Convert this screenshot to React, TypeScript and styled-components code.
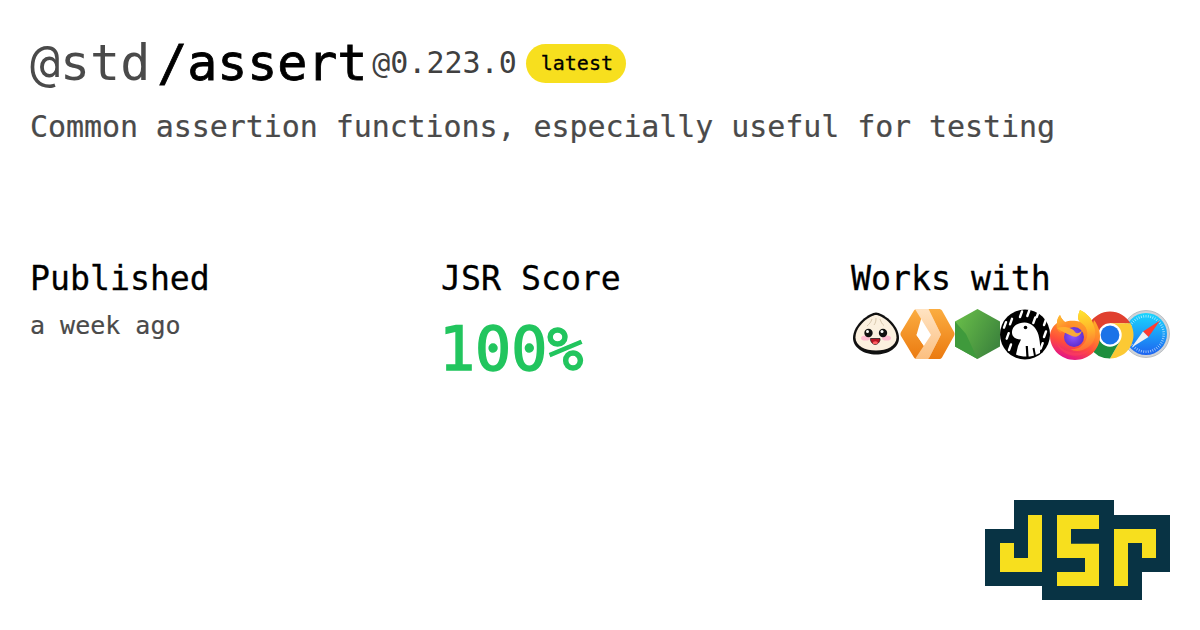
import React from "react";
import styled, { createGlobalStyle } from "styled-components";

const Global = createGlobalStyle`
  html, body { margin: 0; padding: 0; background: #fff; }
  body { font-family: "DejaVu Sans Mono", "Liberation Mono", monospace; }
`;

const Page = styled.div`
  width: 1200px;
  height: 630px;
  box-sizing: border-box;
  padding: 30px 30px 30px;
  display: flex;
  flex-direction: column;
  overflow: hidden;
`;
const TitleRow = styled.div`
  display: flex;
  align-items: center;
  height: 66px;
`;
const Scope = styled.span`
  font-size: 50px;
  color: #4a4a4a;
  margin-right: 7px;
  letter-spacing: -0.05px;
`;
const Name = styled.span`
  font-size: 50px;
  color: #000;
  -webkit-text-stroke: 0.8px #000;
  margin-right: 5px;
  letter-spacing: -0.1px;
`;
const Version = styled.span`
  font-size: 30px;
  color: #404040;
  margin-right: 9px;
  margin-bottom: 2px;
`;
const Badge = styled.span`
  display: inline-flex;
  align-items: center;
  height: 39px;
  padding: 0 13px 0 15px;
  border-radius: 20px;
  background: #f7df1e;
  color: #000;
  font-size: 20px;
  -webkit-text-stroke: 0.3px #000;
`;
const Description = styled.p`
  margin: 13px 0 0;
  font-size: 30px;
  line-height: 36px;
  letter-spacing: -0.08px;
  color: #4a4a4a;
  -webkit-text-stroke: 0.2px #4a4a4a;
`;
const Stats = styled.div`
  display: flex;
  justify-content: space-between;
  margin-top: 114px;
`;
const Stat = styled.div<{ $w: number }>`
  display: flex;
  flex-direction: column;
  flex: none;
  width: ${(p) => p.$w}px;
`;
const Label = styled.div`
  font-size: 33.2px;
  line-height: 40px;
  color: #000;
  white-space: nowrap;
  -webkit-text-stroke: 0.3px #000;
`;
const When = styled.div`
  margin-top: 12px;
  font-size: 25px;
  line-height: 30px;
  color: #4a4a4a;
  -webkit-text-stroke: 0.2px #4a4a4a;
`;
const Score = styled.div`
  margin-top: 14px;
  margin-left: -2px;
  font-size: 60px;
  line-height: 72px;
  color: #22c55e;
  -webkit-text-stroke: 1.5px #22c55e;
`;
const Icons = styled.div`
  display: flex;
  margin-top: 10px;
  margin-left: -1px;
`;
const IconSvg = styled.svg<{ $shift?: number; $z?: number }>`
  display: block;
  flex: none;
  height: 50px;
  overflow: visible;
  margin-left: ${(p) => p.$shift ?? 0}px;
  position: relative;
  z-index: ${(p) => p.$z ?? 0};
`;
const Footer = styled.div`
  margin-top: auto;
  display: flex;
  justify-content: flex-end;
`;
const Logo = styled.svg`
  display: block;
  width: 185px;
  height: 100px;
`;

const Bun = () => (
  <IconSvg width={50} height={50} viewBox="0 0 50 50">
    <path d="M26 3.500C20 3.500 3 15 3 29C3 39 14 45.500 26 45.500C38 45.500 49 39 49 29C49 15 32 3.500 26 3.500Z" fill="#111" />
    <path d="M26 6C21 6 5.500 16 5.500 28.500C5.500 37 15 41.500 26 41.500C37 41.500 46.500 37 46.500 28.500C46.500 16 31 6 26 6Z" fill="#fbf0df" />
    <path d="M22 10C21 13 19.500 15 17 17M26 9C26 12 25.500 14 24 16M30 10C31 13 32 15 34 16.500" stroke="#d8c8ae" strokeWidth="1" fill="none" />
    <ellipse cx="15.500" cy="29" rx="4.500" ry="2.600" fill="#febbd0" />
    <ellipse cx="36.500" cy="29" rx="4.500" ry="2.600" fill="#febbd0" />
    <circle cx="18.500" cy="24" r="4.200" fill="#111" />
    <circle cx="33" cy="24" r="4.200" fill="#111" />
    <circle cx="17.500" cy="22.500" r="1.500" fill="#fff" />
    <circle cx="32" cy="22.500" r="1.500" fill="#fff" />
    <path d="M20.500 29.500H30C30.500 32 28 35.500 25.200 35.500C22.500 35.500 20 32 20.500 29.500Z" fill="#b71422" stroke="#111" strokeWidth=".7" />
    <ellipse cx="25.300" cy="33.800" rx="2.600" ry="1.500" fill="#ff6164" />
  </IconSvg>
);

const Workers = () => (
  <IconSvg width={55} height={50} viewBox="0 0 55 50">
    <defs>
      <linearGradient id="wkL" x1="0" y1="0" x2="0" y2="1">
        <stop offset="0" stopColor="#fbad41" />
        <stop offset="1" stopColor="#eb7a10" />
      </linearGradient>
      <linearGradient id="wkM" x1="0" y1="0" x2="0" y2="1">
        <stop offset="0" stopColor="#ffe3c2" />
        <stop offset="1" stopColor="#fbbf80" />
      </linearGradient>
    </defs>
    <path d="M14 1.500C15 .5 15.500 0 17 0H24L16.500 26L24 37L30 50H17C15.500 50 15 49.500 14 48.500L1 27C.3 25.800 .3 24.200 1 23Z" fill="url(#wkL)" />
    <path d="M16.500 26L24 14.500L31 26L24 37Z" fill="#fff" />
    <path d="M15 0H28.500L41 25.500L28.500 50H15L31 26Z" fill="url(#wkM)" />
    <path d="M28.500 0H39C40.500 0 41 .5 42 1.500L54 23C54.700 24.200 54.700 25.800 54 27L42 48.500C41 49.500 40.500 50 39 50H28.500L41 25.500Z" fill="url(#wkL)" />
  </IconSvg>
);

const Node = () => (
  <IconSvg $shift={-1} width={47} height={50} viewBox="0 0 47 50">
    <defs>
      <linearGradient id="ndG" x1="0" y1="0" x2="1" y2="0.6">
        <stop offset="0" stopColor="#6cc24a" />
        <stop offset="1" stopColor="#3e863d" />
      </linearGradient>
    </defs>
    <path d="M23.500 0L46 12.500V37.500L23.500 50L1 37.500V12.500Z" fill="url(#ndG)" />
    <path d="M1 12.500L12 25L23.500 50L1 37.500Z" fill="#3f9a3c" />
  </IconSvg>
);

const rain = [
  [21, 5], [28.3, 4], [34.3, 11], [37.7, 5], [45, 13], [45, 25], [5, 15.7], [11, 12.3], [7.7, 26.7], [10, 38], [41.7, 36.7],
];

const Deno = () => (
  <IconSvg $shift={-1} $z={1} width={50} height={50} viewBox="0 0 50 50">
    <circle cx="25" cy="25.500" r="25" fill="#000" />
    {rain.map(([x, y]) => (
      <line key={`${x}-${y}`} x1={x - 1} y1={y + 3} x2={x + 1} y2={y - 2.500} stroke="#fff" strokeWidth="2.400" strokeLinecap="round" />
    ))}
    <path d="M24.500 13.500C17 13.500 12 18 12 23.500C12 28 16 30.500 21 30.500L18 37L16 45.500C22 48.500 33 48.500 40 44C40.500 38 40 32 38.500 26C36.500 18.500 31 13.500 24.500 13.500Z" fill="#fff" />
    <circle cx="25.500" cy="18.500" r="1.800" fill="#000" />
    <path d="M26.800 37L27.500 48" stroke="#000" strokeWidth="2.200" />
    <path d="M33.500 39L35 47" stroke="#000" strokeWidth="2" />
  </IconSvg>
);

const Firefox = () => (
  <IconSvg $z={3} width={50} height={50} viewBox="0 0 50 50">
    <defs>
      <linearGradient id="ffA" x1="0.75" y1="0.05" x2="0.4" y2="1">
        <stop offset="0" stopColor="#ffb52a" />
        <stop offset="0.4" stopColor="#ff8a2a" />
        <stop offset="0.7" stopColor="#ff4d3b" />
        <stop offset="1" stopColor="#e31587" />
      </linearGradient>
      <radialGradient id="ffP" cx="0.45" cy="0.45" r="0.6">
        <stop offset="0" stopColor="#9059ff" />
        <stop offset="1" stopColor="#592acb" />
      </radialGradient>
      <linearGradient id="ffT" x1="0" y1="0" x2="0.5" y2="1">
        <stop offset="0" stopColor="#ffc430" />
        <stop offset="1" stopColor="#ff7a2a" />
      </linearGradient>
      <linearGradient id="ffY" x1="0.4" y1="0" x2="0.5" y2="1">
        <stop offset="0" stopColor="#ffe62e" />
        <stop offset="0.5" stopColor="#ffb52a" />
        <stop offset="1" stopColor="#ff6a35" />
      </linearGradient>
    </defs>
    <path d="M30 1C28 6 27 10 30 13C24 11 18 12 15 13C13 11.500 11 9 10 6C8 8 7 11 7 14C3 17 0 22 0 27C0 40 11 51 25 51C39 51 50 40 50 27C50 21 47 15 44 11L43 15C42 9 36 4 30 1Z" fill="url(#ffA)" />
    <circle cx="24" cy="28" r="10" fill="url(#ffP)" />
    <path d="M7 14C6 19 7 21 11 24C13 20 16 17 21 17.500C19 15 17 14 15 13C13 11.500 11 9 10 6C8 8 7 11 7 14Z" fill="url(#ffT)" />
    <path d="M7 19C13 17 22 18 25 23C26 25 30 24.500 32 21C31 27 26 29 22 27C18 25 12 23 7 19Z" fill="#ffb02e" opacity=".95" />
    <path d="M30 1C28 6 27 10 30 13C37 17 39 24 36 31C33 38 26 41 20 40C28 45 42 40 45 28C46 21 44 17 43 15C42 9 36 4 30 1Z" fill="url(#ffY)" />
    <path d="M6 32C9 43 20 49 31 46C38 44 43 39 45 33C41 42 30 46 20 43C13 41 8 37 6 32Z" fill="#ff3f5f" opacity=".55" />
  </IconSvg>
);

const Chrome = () => (
  <IconSvg $shift={-14} $z={2} width={50} height={50} viewBox="0 0 50 50">
    <path d="M24 14.300L44.380 14.300A23.500 23.500 0 0 0 3.700 14.200L13.870 31.850Z" fill="#e0402f" />
    <path d="M44.380 14.300A23.500 23.500 0 0 1 24 49.500L34.130 31.850L24 14.300Z" fill="#fcc934" />
    <path d="M24 49.500A23.500 23.500 0 0 1 3.700 14.200L13.870 31.850L34.130 31.850Z" fill="#1e8e3e" />
    <circle cx="24" cy="26" r="11.700" fill="#fff" />
    <circle cx="24" cy="26" r="9.400" fill="#1a73e8" />
  </IconSvg>
);

const ticks = Array.from({ length: 48 }, (_, i) => (i * 360) / 48);

const Safari = () => (
  <IconSvg $shift={-14} $z={1} width={50} height={50} viewBox="0 0 50 50">
    <defs>
      <linearGradient id="sfB" x1="0.5" y1="0" x2="0.5" y2="1">
        <stop offset="0" stopColor="#19d7ff" />
        <stop offset="1" stopColor="#1e64f0" />
      </linearGradient>
    </defs>
    <circle cx="24" cy="25" r="23.500" fill="#cfd3d8" stroke="#9ea3a8" strokeWidth=".6" />
    <circle cx="24" cy="25" r="21" fill="url(#sfB)" />
    {ticks.map((a) => (
      <line key={a} x1="24" y1="6" x2="24" y2="8.500" stroke="#fff" strokeWidth=".6" opacity=".85" transform={`rotate(${a} 24 25)`} />
    ))}
    <path d="M38 11.500L26.500 28L21 22.500Z" fill="#ff3b30" />
    <path d="M9.500 38.500L21 22.500L26.500 28Z" fill="#eef0f3" />
  </IconSvg>
);

export default function App() {
  return (
    <Page>
      <Global />
      <TitleRow>
        <Scope>@std</Scope>
        <Name>/assert</Name>
        <Version>@0.223.0</Version>
        <Badge>latest</Badge>
      </TitleRow>
      <Description>Common assertion functions, especially useful for testing</Description>
      <Stats>
        <Stat $w={179}>
          <Label>Published</Label>
          <When>a week ago</When>
        </Stat>
        <Stat $w={178}>
          <Label>JSR Score</Label>
          <Score>100%</Score>
        </Stat>
        <Stat $w={319}>
          <Label>Works with</Label>
          <Icons>
            <Bun />
            <Workers />
            <Node />
            <Deno />
            <Firefox />
            <Chrome />
            <Safari />
          </Icons>
        </Stat>
      </Stats>
      <Footer>
        <Logo viewBox="30 30 555 300">
          <path d="M117 30H417V75H585V246H501V330H201V288H30V117H117Z" fill="#083344" />
          <path d="M159 75H201V246H75V159H117V204H159Z" fill="#f7df1e" />
          <path d="M246 75H372V117H288V161H372V288H246V246H330V204H246Z" fill="#f7df1e" />
          <path d="M417 117H543V204H501V159H459V288H417Z" fill="#f7df1e" />
        </Logo>
      </Footer>
    </Page>
  );
}
